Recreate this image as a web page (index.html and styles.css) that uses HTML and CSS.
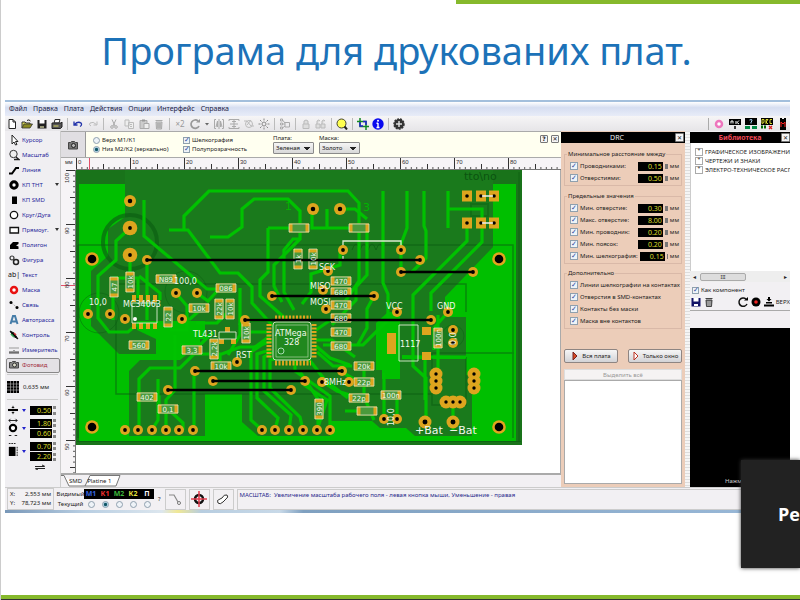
FILE: index.html
```
<!DOCTYPE html>
<html lang="uk">
<head>
<meta charset="utf-8">
<title>Програма для друкованих плат</title>
<link rel="stylesheet" href="styles.css">
</head>
<body>
<div class="slide">
<div class="accent-top"></div>
<h1>Програма для друкованих плат.</h1>

<main class="app">
<nav class="menu"><a href="#">Файл</a><a href="#">Правка</a><a href="#">Плата</a><a href="#">Действия</a><a href="#">Опции</a><a href="#">Интерфейс</a><a href="#">Справка</a></nav>

<div class="toolbar">
<div class="group">
<button aria-label="Новый"><svg viewBox="0 0 12 12"><path d="M3 1.500h4l2.500 2.500v6.500H3zM7 1.500v2.500h2.500" fill="#fff" stroke="#222"/></svg></button>
<button aria-label="Открыть"><svg viewBox="0 0 12 12"><path d="M1 10V4h3l1 1h4v1" fill="#d8d850" stroke="#333"/><path d="M1 10l2-4h8.500l-2.500 4z" fill="#8a8a20" stroke="#333" stroke-width=".8"/><path d="M6 2.500q2-1.500 3.500.5" fill="none" stroke="#222"/></svg></button>
<button aria-label="Сохранить"><svg viewBox="0 0 12 12"><path d="M1.500 2h9v8.500h-9z" fill="#222"/><path d="M3.500 2h5v3.500h-5z" fill="#fff"/><path d="M4 8h4v2H4z" fill="#997"/></svg></button>
<button aria-label="Печать"><svg viewBox="0 0 12 12"><path d="M4 1.500h5L8 5H3z" fill="#fff" stroke="#333"/><path d="M1 5h9l1-1v5l-1.500 1.500H1z" fill="#555" stroke="#222"/><path d="M2.500 8h5" stroke="#dd6"/></svg></button>
</div>
<div class="group">
<button aria-label="Отменить"><svg viewBox="0 0 12 12"><path d="M2 3.500v3.500h3.500M2.500 6.500Q6 3 9 5q1.500 2-1 3.500" fill="none" stroke="#2233aa" stroke-width="1.300"/></svg></button>
<button aria-label="Вернуть"><svg viewBox="0 0 12 12"><path d="M10 3.500v3.500H6.500M9.500 6.500Q6 3 3 5q-1.500 2 1 3" fill="none" stroke="#bbb"/></svg></button>
</div>
<div class="group">
<button aria-label="Вырезать"><svg viewBox="0 0 12 12"><path d="M4 1.500l3 6.500M8 1.500L5 8" stroke="#aaa"/><circle cx="4" cy="9" r="1.300" fill="none" stroke="#aaa"/><circle cx="8" cy="9" r="1.300" fill="none" stroke="#aaa"/></svg></button>
<button aria-label="Копировать"><svg viewBox="0 0 12 12"><path d="M2 2h4v6H2zM5.500 4.500h5v6h-5z" fill="#eee" stroke="#bbb"/><path d="M7 6.500h2M7 8.500h2" stroke="#bbb"/></svg></button>
<button aria-label="Вставить"><svg viewBox="0 0 12 12"><path d="M2 2.500h7v8H2z" fill="#ccc" stroke="#aaa"/><path d="M4 1.500h3v2H4z" fill="#999"/><path d="M6 5.500h5v5H6z" fill="#eee" stroke="#aaa"/></svg></button>
<button aria-label="Удалить"><svg viewBox="0 0 12 12"><path d="M3 4h6l-.5 7h-5zM2.500 2.500h7" fill="#ccc" stroke="#aaa"/><path d="M5 5v5M7 5v5" stroke="#999"/></svg></button>
</div>
<div class="group">
<button aria-label="Дублировать" class="x2">×2</button>
<button aria-label="Повернуть"><svg viewBox="0 0 12 12"><path d="M9 3A4.200 4.200 0 1 0 10 8" fill="none" stroke="#999" stroke-width="1.700"/><path d="M7 4.500h4V1z" fill="#999"/></svg></button>
<button aria-label="Угол поворота" class="drop"><svg viewBox="0 0 6 12"><path d="M1 5h4L3 7.500z" fill="#666"/></svg></button>
<button aria-label="По горизонтали"><svg viewBox="0 0 12 12"><path d="M3 1.500H1.500v9H3M9 1.500h1.500v9H9M6 1v10M3 9l1.500-6v6M9 9L7.500 3v6" fill="none" stroke="#aaa"/></svg></button>
<button aria-label="По вертикали"><svg viewBox="0 0 12 12"><path d="M1 3V1.500h10V3M1 9v1.500h10V9M2 6h8M4 3.500h4M4 8.500h4M6 2v8" fill="none" stroke="#aaa"/></svg></button>
<button aria-label="Выровнять"><svg viewBox="0 0 12 12"><path d="M1 3h3l4 5h3M8 2L4 7" fill="none" stroke="#bbb"/><circle cx="6" cy="6" r="3.500" fill="none" stroke="#bbb"/></svg></button>
<button aria-label="По сетке"><svg viewBox="0 0 12 12"><circle cx="6" cy="6" r="2" fill="none" stroke="#888"/><path d="M6 .5v2M6 9.500v2M.5 6h2M9.500 6h2M2 2l1.500 1.500M8.500 8.500L10 10M2 10l1.500-1.500M8.500 3.500L10 2" stroke="#888"/></svg></button>
</div>
<div class="group"><button aria-label="Список"><svg viewBox="0 0 12 12"><path d="M1.500 1h2v2h-2zM1.500 5h2v2h-2zM1.500 9h2v2h-2zM3.500 2L6 5M3.500 6H6M3.500 10L6 8M6 4.500h4.500V9H6z" fill="none" stroke="#aaa"/></svg></button></div>
<div class="group">
<button aria-label="Группировать"><svg viewBox="0 0 12 12"><path d="M3 6h6v4.500H3zM4 6V3q2-2 4 0v3" fill="#ddd" stroke="#bbb"/></svg></button>
<button aria-label="Разгруппировать"><svg viewBox="0 0 12 12"><path d="M1 6h4v4H1zM6 6h4v4H6zM2 6V3q2-2 3 0M7 6V3q2-2 3 0" fill="#ddd" stroke="#bbb"/></svg></button>
</div>
<div class="group"><button aria-label="Лупа"><svg viewBox="0 0 12 12"><circle cx="5.500" cy="5.500" r="4.500" fill="#ffff50" stroke="#443"/><path d="M8.500 8.500L11 11.500" stroke="#222" stroke-width="2"/></svg></button></div>
<div class="group">
<button aria-label="Обрезка"><svg viewBox="0 0 12 12"><path d="M3 0v8.500h9M0 3.500h9V12" fill="none" stroke="#118822" stroke-width="1.500"/><path d="M3 4v4h3M6 3.500h3V7" fill="none" stroke="#22c" stroke-width="1.500"/></svg></button>
<button aria-label="Информация"><svg viewBox="0 0 12 12"><circle cx="6" cy="6" r="5.700" fill="#0909ef"/><path d="M6 5v4.500M4.500 5.200H6M4.500 9.500h3" stroke="#fff" stroke-width="1.400"/><circle cx="6" cy="2.800" r="1" fill="#fff"/></svg></button>
</div>
<div class="group last"><button aria-label="Макрос"><svg viewBox="0 0 12 12"><circle cx="6" cy="6" r="5" fill="#333" stroke="#333" stroke-width="1.500" stroke-dasharray="2 1"/><path d="M6 3v6M3 6h6" stroke="#ddd" stroke-width="1.500"/></svg></button></div>
<div class="group views">
<button aria-label="Отверстия"><svg viewBox="0 0 12 12"><circle cx="6" cy="6" r="3" fill="#fff" stroke="#ee76bd" stroke-width="2.500"/></svg></button>
<button aria-label="Свойства"><svg viewBox="0 0 12 12"><path d="M0 1h12v6H0z"/><path d="M2 5.500V3h2v2.500M7 3v3M10 2.500l-2 2 2 1.500" fill="none" stroke="#fff"/><path d="M6 8v3" stroke="#000" stroke-width="1.500"/></svg></button>
<button aria-label="Селектор"><svg viewBox="0 0 12 12"><path d="M0 0h12v7H0z"/><path d="M4.500 2q3-1.500 2.500 1L6 4v1.500" fill="none" stroke="#adf"/><path d="M0 8h5v3H0zM7 8h5v3H7z" fill="#084"/></svg></button>
<button aria-label="DRC"><svg viewBox="0 0 12 12"><path d="M0 0h12v7H0z"/><path d="M1 1.500v4q3 0 2-4zM5 6V1.500h2L5 4l2 2M11 1.500H9v4h2" fill="none" stroke="#ee3" stroke-width=".9"/><path d="M0 9h6" stroke="#060" stroke-width="3" stroke-dasharray="2 1"/><path d="M8 8l3 3M11 8l-3 3" stroke="#d22" stroke-width="1.300"/></svg></button>
<button aria-label="Макросы"><svg viewBox="0 0 12 12"><path d="M3 0h2v1h2V0h2v12H3z"/><path d="M4 9V4l2 2 2-2v5" fill="none" stroke="#f22"/></svg></button>
</div>
</div>

<div class="body">
<aside class="tools">
<button><svg viewBox="0 0 12 12"><path d="M4 1v9l2-2 1.500 3L9 10.500 7.500 7.500H10z" fill="#fff" stroke="#222"/></svg>Курсор</button>
<button><svg viewBox="0 0 12 12"><circle cx="5.500" cy="5" r="3.700" fill="#eee" stroke="#333"/><path d="M8 8l3 2.500H6" stroke="#222" fill="none" stroke-width="1.300"/></svg>Масштаб</button>
<button><svg viewBox="0 0 12 12"><path d="M1 9.500h3L8 4h3" fill="none" stroke="#000" stroke-width="2"/></svg>Линия</button>
<button><svg viewBox="0 0 12 12"><circle cx="6" cy="6" r="3.200" fill="#fff" stroke="#000" stroke-width="3"/></svg>КП ТНТ<i></i></button>
<button><svg viewBox="0 0 12 12"><path d="M4 2.500h5v7.500H4z"/></svg>КП SMD</button>
<button><svg viewBox="0 0 12 12"><circle cx="6" cy="6" r="3.700" fill="#fff" stroke="#111" stroke-width="1.300"/></svg>Круг/Дуга</button>
<button><svg viewBox="0 0 12 12"><path d="M2 3.500h8.500v5.500H2z" fill="#fff" stroke="#111" stroke-width="1.300"/></svg>Прямоуг.<i></i></button>
<button><svg viewBox="0 0 12 12"><path d="M2 10V6l3-3h5.500v2L8 6.500l2.500 1V10z"/></svg>Полигон</button>
<button><svg viewBox="0 0 12 12"><circle cx="4" cy="4" r="2" fill="none" stroke="#333" stroke-width="1.200"/><circle cx="8" cy="8" r="2.500" fill="none" stroke="#222" stroke-width="1.500"/></svg>Фигура</button>
<button><b>ab|</b>Текст</button>
<button><svg viewBox="0 0 12 12"><circle cx="6" cy="6" r="3" fill="#fff" stroke="#e81111" stroke-width="2.500"/></svg>Маска</button>
<button><svg viewBox="0 0 12 12"><path d="M3 3.500l6 5" stroke="#999" stroke-dasharray="1 1"/><circle cx="3" cy="3.500" r="1.500"/><circle cx="9" cy="8.500" r="1.500"/></svg>Связь</button>
<button><svg viewBox="0 0 12 12"><path d="M2.500 10L5 2h2l2.500 8M4 7.500h4" fill="none" stroke="#447ca8" stroke-width="2"/></svg>Автотрасса</button>
<button><svg viewBox="0 0 12 12"><path d="M2 2l4 2 4 6-5-3z" stroke="#111"/><path d="M3 5l3 3" stroke="#3a5" stroke-width="1.500"/><path d="M6 4l2 2" stroke="#c33" stroke-width="1.500"/></svg>Контроль</button>
<button><svg viewBox="0 0 12 12"><path d="M1 4h10" stroke="#999"/><path d="M1 9h10M2 9V7M4 9V7M6 9V6M8 9V7M10 9V7" stroke="#444"/></svg>Измеритель</button>
<button class="active"><svg viewBox="0 0 12 12"><path d="M1.500 3.500h2l1-1h3l1 1h2V9h-9z" fill="#888" stroke="#444"/><circle cx="6.500" cy="6" r="2" fill="#ddc" stroke="#333"/></svg>Фотовид</button>
<div class="grid-step"><svg viewBox="0 0 12 12"><path d="M0 0h12v12H0z"/><path d="M3.500 0v12M6.500 0v12M9.500 0v12M0 3h12M0 6h12M0 9h12" stroke="#bbb" stroke-width=".6"/></svg>0,635 мм</div>
<div class="size"><svg viewBox="0 0 12 12"><path d="M0 6h12" stroke="#000" stroke-width="2.500"/><path d="M6 1v3M6 8v3M4.500 3h3M4.500 9h3" stroke="#000"/></svg><i></i><div><input aria-label="Ширина дорожки" value="0.50"></div></div>
<div class="size"><svg viewBox="0 0 12 24"><path d="M1 3h10M3 1L1 3l2 2M9 1l2 2-2 2M1 21h3M8 21h3" fill="none" stroke="#000"/><circle cx="6" cy="12" r="3.800" fill="#fff" stroke="#000" stroke-width="2.500"/></svg><i></i><div><input aria-label="Диаметр площадки" value="1.80"><input aria-label="Диаметр отверстия" value="0.60"></div></div>
<div class="size"><svg viewBox="0 0 12 24"><path d="M1 7h8v11H1z"/><path d="M1 3h8M11 7v11" stroke="#000" stroke-dasharray="2 1"/></svg><i></i><div><input aria-label="Ширина SMD" value="0.70"><input aria-label="Высота SMD" value="2.20"></div></div>
<svg class="swap" viewBox="0 0 12 6"><path d="M1 2.500h9M8 1l3 1.500M11 4.500H2M4 6L1 4.500" fill="none" stroke="#222"/></svg>
</aside>

<section class="work">
<div class="options">
<div class="camera"><svg viewBox="0 0 12 12"><path d="M1.500 3.500h2l1-1h3l1 1h2V10h-9z" fill="#777" stroke="#444"/><circle cx="6.500" cy="6.500" r="2" fill="#bbb" stroke="#222"/></svg></div>
<div class="stack sides"><label><input type="radio" name="side">Верх М1/К1</label><label><input type="radio" name="side" checked>Низ М2/К2 (зеркально)</label></div>
<div class="stack"><label><input type="checkbox" checked>Шелкография</label><label><input type="checkbox" checked>Полупрозрачность</label></div>
<label class="pick">Плата:<select><option>Зеленая</option></select></label>
<label class="pick">Маска:<select><option>Золото</option></select></label>
<div class="corner"><button>?</button><button aria-label="Закрыть">✕</button></div>
</div>
<div class="ruler-row"><span class="unit">мм</span>
<svg class="hruler" height="12">
<defs>
<pattern id="ht" width="54" height="12" patternUnits="userSpaceOnUse"><path d="M.5 0v12M27.500 6v6" stroke="#333"/><path d="M5.900 9v3M11.300 9v3M16.700 9v3M22.100 9v3M32.900 9v3M38.300 9v3M43.700 9v3M49.100 9v3" stroke="#555"/></pattern></defs>
<rect width="100%" height="12" fill="url(#ht)"/><path d="M0 11.500h490" stroke="#777"/><path d="M13.500 0v12" stroke="#e2506a"/>
<g class="num"><text x="2" y="6">0</text><text x="56" y="6">10</text><text x="110" y="6">20</text><text x="164" y="6">30</text><text x="218" y="6">40</text><text x="272" y="6">50</text><text x="326" y="6">60</text><text x="380" y="6">70</text><text x="434" y="6">80</text></g>
</svg></div>
<div class="view">
<svg class="vruler" width="15">
<defs><pattern id="vt" width="15" height="54" patternUnits="userSpaceOnUse"><path d="M5 .5h10M9 27.500h6" stroke="#333"/><path d="M12 5.900h3M12 11.300h3M12 16.700h3M12 22.100h3M12 32.900h3M12 38.300h3M12 43.700h3M12 49.100h3" stroke="#555"/></pattern></defs>
<rect width="15" height="100%" fill="url(#vt)"/><path d="M14.500 0v304" stroke="#777"/><path d="M0 115.500h14" stroke="#e2506a"/>
<g class="num"><text transform="translate(8 13)rotate(-90)">100</text><text transform="translate(8 64)rotate(-90)">90</text><text transform="translate(8 118)rotate(-90)">80</text><text transform="translate(8 172)rotate(-90)">70</text><text transform="translate(8 226)rotate(-90)">60</text><text transform="translate(8 280)rotate(-90)">50</text></g>
</svg>
<svg class="board" viewBox="76 170 446 275" width="446" height="275">
<defs>
<g id="p"><circle r="5" fill="#dda51e"/><circle r="1.900"/></g>
<g id="q"><circle r="7.300" fill="#dda51e"/><circle r="1.900"/></g>
<g id="o"><circle r="6.800" fill="#e2a51e"/><circle r="4.300"/></g>
<g id="s"><path d="M-10-4.500h20v9h-20z" fill="#dda51e"/><path d="M-6.500-4.500h13v9h-13z" fill="#4a9a3c"/><path d="M-10-4h20v8h-20z" fill="none" stroke="#e0ead0" stroke-width=".7"/></g>
<g id="k"><path d="M-5-5.500H5v11H-5z" fill="#dda51e"/><circle r="1.800"/></g>
</defs>
<rect x="76" y="170" width="446" height="275" fill="#19731a"/>
<rect x="79" y="184" width="437" height="257" fill="#00bf00"/>
<path fill="#1a7a1c" d="M125 170H493V247L445 297V317H466V375H472V436H415L406 428H380L372 421H330V436H258L242 422V394H205V436H129V371L140 360H180L190 352H200V334H156V354H119L91 326V271L108 256V229L125 217Z"/>
<path fill="#00bf00" d="M376 323L388 312H400V379H382V370H376ZM137 321H205V339H156L137 330ZM402 355L466 356V359H402Z"/>
<g fill="none" stroke="#0b5d12">
<circle cx="130" cy="242" r="27" stroke-width="4" opacity=".65"/>
<path d="M78 245H513V438M78 245V438M116 320V394H432M116 284H466V312M432 353H514M432 353V405H466V357" stroke-width="1.500" opacity=".55"/>
<path d="M77 441.500H521M519 172V441M352 250q4-12 8 0 4-12 8 0 4-12 8 0 4-12 8 0" opacity=".7"/>
<circle cx="186" cy="292" r="21" opacity=".45"/><circle cx="99" cy="313" r="20" opacity=".45"/><circle cx="453" cy="336" r="11" opacity=".45"/>
<path d="M471 204h17v12h-17z" stroke-width="2" opacity=".4"/>
</g>
<g fill="none" stroke="#00c200" stroke-width="3.200">
<path d="M144 200V236L207 289H220M169 230H188L220 273H238L252 287V303L273 326M184 230V216L209 191H348L359 203V281L340 309M210 237H228L242 227V209L254 199H288L300 211V239L274 265V286L282 302"/>
<path d="M268 228H299M268 228V272L260 280V296L286 319M299 239H293L284 250V292L294 310M130 228L116 241V260L98 276V318L109 332H128L139 323"/>
<path d="M147 260V320M130 256V280M112 278H138V298M139 276L160 293V300M176 293L187 306V330H170M197 293L208 301 220 288M240 288V335L228 355M220 354V369"/>
<path d="M139 430V379L150 368H180L194 354H222L240 347H255L270 336M152 430L158 420V379M166 430V400L175 390V335M194 430V374M262 430L251 420V352L266 342M275 430L278 418 257 398V354L270 350M289 430L291 415 264 391V357L273 352M303 430L300 417 270 388V360L280 358M317 430L327 400 304 385M330 430V396L295 371V360"/>
<path d="M383 191V283L388 294V320L363 345H323M407 191V228L401 244V273M424 191V226L426 231V258L412 272M448 191V228M448 209H482V242L431 293V311M467 227V241L413 295V366L426 378V425M312 211V228H359M327 209V228M340 209H355L367 219M367 230V275L356 287V300L332 325M340 250V265L311 274V292L302 304M374 296L367 309V328L357 346M316 330L332 319M316 340H332L355 357M316 346L330 358 350 365M317 352L333 366 352 366M308 358L325 380 348 398M323 382L337 391 350 395M300 372L318 399V426M340 371L359 382M364 366V397L374 420M397 419V398M384 419V373M425 357V400M453 402V430M438 315V375L430 381M466 357H430M448 312L434 328V350M345 411H370"/>
<path d="M196 323H217L230 310M180 345H200L213 332M147 397H159V413M168 409L183 423V430M113 292V320M182 319H190L200 310M243 320H272M270 332H249L239 323M272 341L252 348"/>
</g>
<g fill="#dda51e">
<path d="M132 295h4v7h-4zM139 295h4v7h-4zM146 295h4v7h-4zM153 295h4v7h-4zM132 323h4v6h-4zM139 323h4v6h-4zM146 323h4v6h-4zM153 323h4v6h-4z"/>
<path d="M225 327h5v5h-5zM219 339h5v5h-5zM231 339h5v5h-5zM387 333h9v21h-9zM422 327h9v8h-9zM422 352h9v8h-9z"/>
</g>
<path d="M275 318H311M275 363H311M269 324V358M314 324V358" fill="none" stroke="#dda51e" stroke-width="5" stroke-dasharray="2 1.500"/>
<rect x="273" y="322" width="38" height="38" rx="3" fill="#20881e" stroke="#c8dfb8"/>
<rect x="276" y="325" width="32" height="32" fill="none" stroke="#c8dfb8" stroke-width=".6"/>
<circle cx="281" cy="351" r="3" fill="none" stroke="#dfe" stroke-width=".7"/>
<g fill="none" stroke="#dcebd0" stroke-width=".9"><path d="M132 303h25v20h-25zM219 332h17v7h-17zM399 325h19v36h-19z"/><path d="M343 250V241H401V250M343 256v3" stroke-width="1.300"/></g>
<circle cx="135" cy="319" r="2" fill="#fff"/>
<use href="#s" x="166" y="279"/><use href="#s" x="226" y="288"/><use href="#s" x="199" y="308"/><use href="#s" x="139" y="345"/><use href="#s" x="192" y="350"/><use href="#s" x="221" y="366"/><use href="#s" x="147" y="397"/><use href="#s" x="168" y="409"/><use href="#s" x="299" y="228"/><use href="#s" x="359" y="228"/><use href="#s" x="341" y="281"/><use href="#s" x="341" y="292"/><use href="#s" x="341" y="305"/><use href="#s" x="341" y="318"/><use href="#s" x="341" y="332"/><use href="#s" x="341" y="346"/><use href="#s" x="364" y="366"/><use href="#s" x="364" y="382"/><use href="#s" x="359" y="398"/><use href="#s" x="391" y="395"/><use href="#s" x="367" y="411"/>
<use href="#s" transform="translate(130 282)rotate(90)"/><use href="#s" transform="translate(114 287)rotate(90)"/><use href="#s" transform="translate(168 317)rotate(90)"/><use href="#s" transform="translate(219 309)rotate(90)"/><use href="#s" transform="translate(230 309)rotate(90)"/><use href="#s" transform="translate(246 333)rotate(90)"/><use href="#s" transform="translate(214 349)rotate(90)"/><use href="#s" transform="translate(298 259)rotate(90)"/><use href="#s" transform="translate(313 259)rotate(90)"/><use href="#s" transform="translate(319 409)rotate(90)"/><use href="#s" transform="translate(438 338)rotate(90)"/>
<g fill="#dda51e"><circle cx="436" cy="374" r="6.500"/><circle cx="436" cy="381" r="6.500"/><circle cx="436" cy="388" r="6.500"/><circle cx="474" cy="374" r="6.500"/><circle cx="474" cy="381" r="6.500"/><circle cx="474" cy="388" r="6.500"/><circle cx="446" cy="402" r="6.500"/><circle cx="453" cy="402" r="6.500"/><circle cx="460" cy="402" r="6.500"/></g>
<g><circle cx="436" cy="374" r="1.700"/><circle cx="436" cy="381" r="1.700"/><circle cx="436" cy="388" r="1.700"/><circle cx="474" cy="374" r="1.700"/><circle cx="474" cy="381" r="1.700"/><circle cx="474" cy="388" r="1.700"/><circle cx="446" cy="402" r="1.700"/><circle cx="453" cy="402" r="1.700"/><circle cx="460" cy="402" r="1.700"/></g>
<use href="#k" x="467" y="196"/><use href="#k" x="481" y="196"/><use href="#k" x="494" y="196"/><use href="#k" x="467" y="223"/><use href="#k" x="481" y="223"/><use href="#k" x="494" y="223"/>
<path d="M482 196h11M482 223h11" stroke="#eee" stroke-width="1.500"/>
<use href="#q" x="130" y="228"/><use href="#q" x="130" y="255"/><use href="#p" transform="translate(130 201)scale(1.200)"/><use href="#p" transform="translate(313 209)scale(1.200)"/><use href="#p" transform="translate(340 209)scale(1.200)"/><use href="#p" transform="translate(425 422)scale(1.300)"/><use href="#p" transform="translate(453 422)scale(1.300)"/>
<use href="#p" x="147" y="260"/><use href="#p" x="88" y="314"/><use href="#p" x="110" y="314"/><use href="#p" x="176" y="293"/><use href="#p" x="197" y="293"/><use href="#p" x="125" y="319"/><use href="#p" x="182" y="319"/><use href="#p" x="343" y="250"/><use href="#p" x="401" y="250"/><use href="#p" x="420" y="260"/><use href="#p" x="401" y="272"/><use href="#p" x="473" y="272"/><use href="#p" x="328" y="271"/><use href="#p" x="323" y="290"/><use href="#p" x="326" y="309"/><use href="#p" x="374" y="296"/><use href="#p" x="272" y="296"/><use href="#p" x="397" y="312"/><use href="#p" x="448" y="312"/><use href="#p" x="431" y="320"/><use href="#p" x="245" y="320"/><use href="#p" x="237" y="362"/><use href="#p" x="195" y="371"/><use href="#p" x="213" y="381"/><use href="#p" x="168" y="390"/><use href="#p" x="291" y="390"/><use href="#p" x="342" y="371"/><use href="#p" x="305" y="381"/><use href="#p" x="322" y="382"/><use href="#p" x="349" y="382"/><use href="#p" x="384" y="419"/><use href="#p" x="397" y="419"/><use href="#p" x="453" y="330"/><use href="#p" x="453" y="343"/>
<use href="#p" x="125" y="430"/><use href="#p" x="138" y="430"/><use href="#p" x="152" y="430"/><use href="#p" x="166" y="430"/><use href="#p" x="179" y="430"/><use href="#p" x="193" y="430"/><use href="#p" x="262" y="430"/><use href="#p" x="275" y="430"/><use href="#p" x="289" y="430"/><use href="#p" x="303" y="430"/><use href="#p" x="317" y="430"/><use href="#p" x="330" y="430"/>
<use href="#o" x="92" y="259"/><use href="#o" x="499" y="259"/><use href="#o" x="92" y="427"/><use href="#o" x="499" y="427"/>
<path d="M147 260H420M401 272H473M272 296H374M245 320H431M195 371H342M213 381H305M168 390H291" stroke="#000" stroke-width="2.700"/>
<g class="silk">
<text x="89" y="305">10,0</text><text x="174" y="284">100,0</text><text x="123" y="307">MC34063</text><text x="193" y="337">TL431</text><text x="236" y="358">RST</text><text x="275" y="336">ATMega</text><text x="284" y="345">328</text><text x="319" y="270">SCK</text><text x="310" y="289">MISO</text><text x="310" y="305">MOSI</text><text x="386" y="309">VCC</text><text x="437" y="309">GND</text><text x="400" y="347">1117</text><text x="324" y="385">8MHz</text><text transform="translate(394 426)rotate(-90)">10,0</text><text transform="translate(456 345)rotate(-90)">0,0</text>
<text class="big" x="415" y="434">+Bat</text><text class="big" x="449" y="434">−Bat</text>
</g>
<g class="silk value"><text x="166" y="282">N89</text><text x="226" y="291">086</text><text x="199" y="311">10k</text><text x="139" y="348">560</text><text x="192" y="353">3,3</text><text x="221" y="369">10k</text><text x="147" y="400">402</text><text x="168" y="412">0,1</text><text x="341" y="284">470</text><text x="341" y="295">680</text><text x="341" y="308">470</text><text x="341" y="321">680</text><text x="341" y="335">470</text><text x="341" y="349">680</text><text x="364" y="369">20k</text><text x="364" y="385">22p</text><text x="359" y="401">22p</text><text x="391" y="398">100n</text>
<text transform="translate(133 282)rotate(-90)">10k</text><text transform="translate(117 287)rotate(-90)">47</text><text transform="translate(171 317)rotate(-90)">22</text><text transform="translate(222 309)rotate(-90)">22k</text><text transform="translate(233 309)rotate(-90)">10k</text><text transform="translate(249 333)rotate(-90)">10k</text><text transform="translate(217 349)rotate(-90)">2,2k</text><text transform="translate(301 259)rotate(-90)">1k</text><text transform="translate(316 259)rotate(-90)">10k</text><text transform="translate(322 409)rotate(-90)">390</text><text transform="translate(441 338)rotate(-90)">100n</text></g>
<g class="etch"><text x="285" y="210">1</text><text x="363" y="211">3</text></g><text class="etch dark" x="464" y="180">tto\no</text>
</svg>
</div>
<div class="tabs"><svg viewBox="0 0 60 12"><path d="M0 .5h3L8 11h16L29 .500H59L55 11H24" fill="#fff" stroke="#777"/></svg><a href="#">SMD</a><a href="#">Platine 1</a></div>
</section>

<section class="drc">
<h2>DRC<button aria-label="Закрыть">✕</button></h2>
<div class="drc-body">
<fieldset><legend>Минимальное расстояние между</legend>
<div class="limit"><label><input type="checkbox" checked>Проводниками:</label><input class="val" aria-label="Проводниками" value="0.15"><b></b>мм</div>
<div class="limit"><label><input type="checkbox" checked>Отверстиями:</label><input class="val" aria-label="Отверстиями" value="0.50"><b></b>мм</div></fieldset>
<fieldset><legend>Предельные значения</legend>
<div class="limit"><label><input type="checkbox" checked>Мин. отверстие:</label><input class="val" aria-label="Мин. отверстие" value="0.30"><b></b>мм</div>
<div class="limit"><label><input type="checkbox" checked>Макс. отверстие:</label><input class="val" aria-label="Макс. отверстие" value="8.00"><b></b>мм</div>
<div class="limit"><label><input type="checkbox" checked>Мин. проводник:</label><input class="val" aria-label="Мин. проводник" value="0.20"><b></b>мм</div>
<div class="limit"><label><input type="checkbox" checked>Мин. поясок:</label><input class="val" aria-label="Мин. поясок" value="0.20"><b></b>мм</div>
<div class="limit"><label><input type="checkbox" checked>Мин. шелкография:</label><input class="val" aria-label="Мин. шелкография" value="0.15"><b></b>мм</div></fieldset>
<fieldset><legend>Дополнительно</legend>
<div class="limit"><label><input type="checkbox" checked>Линии шелкографии на контактах</label></div>
<div class="limit"><label><input type="checkbox" checked>Отверстия в SMD-контактах</label></div>
<div class="limit"><label><input type="checkbox" checked>Контакты без маски</label></div>
<div class="limit"><label><input type="checkbox" checked>Маска вне контактов</label></div></fieldset>
<div class="run"><button><svg viewBox="0 0 8 10"><path d="M2 1l4 4-4 4z" fill="#d64a22" stroke="#722"/></svg>Вся плата</button><button><svg viewBox="0 0 8 10"><path d="M2 1l4 4-4 4z" fill="#fff" stroke="#b32"/></svg>Только окно</button></div>
<button class="all" disabled>Выделить всё</button>
<div class="results"></div>
</div>
</section>
<div class="splitter"></div>
<section class="library">
<h2>Библиотека<button aria-label="Закрыть">✕</button></h2>
<ul><li>ГРАФИЧЕСКОЕ ИЗОБРАЖЕНИЕ</li><li>ЧЕРТЕЖИ И ЗНАКИ</li><li>ЭЛЕКТРО-ТЕХНИЧЕСКОЕ РАСП</li></ul>
<div class="scroll"><span>◂</span><div>III</div><span>▸</span></div>
<label class="comp"><input type="checkbox" checked>Как компонент</label>
<div class="lib-tools">
<button aria-label="Сохранить"><svg viewBox="0 0 12 12"><path d="M1.500 2h9v8.500h-9z" fill="#116"/><path d="M3.500 2h5v3.500h-5zM4 8h4v2H4z" fill="#fff"/></svg></button>
<button aria-label="Удалить"><svg viewBox="0 0 12 12"><path d="M3 4h6l-.5 6.500h-5zM2.500 2.500h7" fill="#666" stroke="#444"/><path d="M5 5v5M7 5v5" stroke="#ccc"/></svg></button>
<button class="push" aria-label="Повернуть"><svg viewBox="0 0 12 12"><path d="M9 3A4.200 4.200 0 1 0 10 8" fill="none" stroke="#111" stroke-width="1.500"/><path d="M7 4.500h4V1z"/></svg></button>
<button aria-label="Точка"><svg viewBox="0 0 12 12"><circle cx="6" cy="6" r="4.500"/><circle cx="6" cy="6" r="1.800" fill="#e22"/></svg></button>
<button aria-label="Вниз"><svg viewBox="0 0 12 12"><path d="M5 1h2v2h1.500L6 5.500 3.500 3H5zM3 6h6v1.500H3zM1 8.500h10v2H1z"/></svg></button><span>ВЕРХ</span></div>
<div class="blank"></div>
<div class="preview">Нажмите</div>
</section>
</div>

<footer class="status">
<div class="coords"><span>X:</span><span>2,553 мм</span><span>Y:</span><span>78,723 мм</span></div>
<div class="layers"><span>Видимый</span><b class="m1">М1</b><b class="k1">К1</b><b class="m2">М2</b><b class="k2">К2</b><b>П</b><span>Текущий</span><input type="radio" name="layer" aria-label="М1"><input type="radio" name="layer" aria-label="К1" checked><input type="radio" name="layer" aria-label="М2"><input type="radio" name="layer" aria-label="К2"><input type="radio" name="layer" aria-label="П"></div>
<span class="q">?</span>
<button aria-label="Излом"><svg viewBox="0 0 16 16"><path d="M2 4h5l4 7" fill="none" stroke="#888" stroke-width="1.200"/><circle cx="12" cy="12" r="1.500" fill="#fff" stroke="#777"/></svg></button>
<button aria-label="Прицел"><svg viewBox="0 0 16 16"><circle cx="8" cy="8" r="4" fill="none" stroke="#111" stroke-width="2.500"/><path d="M8 0v16M0 8h16" stroke="#e33b4d" stroke-width="1.500"/></svg></button>
<button aria-label="Контур"><svg viewBox="0 0 16 16"><path d="M3 12q-2-3 2-4l2-1q2-4 5-3 2 2-1 4l-3 3q-3 3-5 1z" fill="#fff" stroke="#333"/></svg></button>
<p>МАСШТАБ: &nbsp;Увеличение масштаба рабочего поля - левая кнопка мыши, Уменьшение - правая</p>
</footer>
<div class="taskbar"></div>
</main>
<div class="accent-bottom"></div>
<div class="overlay">Ре</div>
</div>
</body>
</html>
```
FILE: styles.css
```
* { box-sizing: border-box; }
body { margin: 0; background: #fff; color: #222; font: 6px/8px "Noto Sans", "Open Sans", sans-serif; }
button, input, select { font: inherit; color: inherit; margin: 0; padding: 0; border: 0; background: none; }
a { color: inherit; text-decoration: none; }
svg { display: block; flex: none; }
.slide { position: relative; min-height: 100vh; display: flex; flex-direction: column; border-left: 1px solid #ccc; overflow: hidden; }
.accent-top { height: 4px; margin-left: 57%; background: #86b92c; }
.accent-bottom { height: 5px; margin-top: auto; background: #86b92c; border-bottom: 1px solid #333; }
h1 { margin: 0; height: 96px; padding-right: 8px; text-align: center; font: 400 38px/92px "Noto Sans", "Open Sans", sans-serif; color: #1c72b8; white-space: nowrap; }
.app { margin: 0 10px 0 4px; background: #f2f0f3; border-top: 2px solid #a3bfdc; }

.menu { display: flex; gap: 6px; height: 14px; padding: 0 4px; align-items: center; background: linear-gradient(#fff, #d6def1 40%, #e8ecf8); font-size: 7px; color: #222244; }
.toolbar { display: flex; height: 15px; align-items: center; padding-left: 1px; background: linear-gradient(#f6f5f6, #e6e5e8); }
.group { display: flex; gap: 3px; padding-right: 4px; margin-right: 4px; border-right: 1px solid #bbb; }
.toolbar button, .toolbar svg { width: 12px; height: 12px; }
.toolbar .drop, .drop svg { width: 6px; }
.x2 { font-size: 8px; color: #999; }
.last { border-right: 0; }
.views { margin: 0 0 0 auto; padding: 0 1px 0 4px; gap: 4px; border-right: 0; border-left: 1px solid #aaa; }

.body { display: flex; height: 356px; }
.tools { flex: none; width: 56px; padding: 2px 1px; border-right: 1px solid #ccc; background: #f0eff2; }
.tools > button { display: flex; align-items: center; gap: 2px; width: 54px; height: 15px; padding: 0 0 2px 1px; color: #27279b; text-align: left; border: 1px solid transparent; }
.tools svg { width: 12px; height: 12px; }
.tools b { width: 12px; font-weight: 400; font-size: 7px; color: #111; }
.tools button i { margin-left: auto; }
.tools i { border: 2px solid transparent; border-top: 3px solid #333; border-bottom: 0; }
.tools > .active { border: 1px solid #888; border-radius: 2px; background: #e3e1e5; color: #a22c3c; }
.grid-step { display: flex; align-items: center; gap: 4px; height: 26px; margin: 1px 1px 5px; border: solid #ccc; border-width: 1px 0; }
.size { display: flex; align-items: center; gap: 4px; min-height: 10px; margin-bottom: 3px; padding-left: 2px; }
.size svg { height: auto; width: 10px; }
.size i { border-top-color: #22c; }
.size div { display: grid; gap: 1px; border-right: 3px dotted #888; padding-right: 1px; }
.size input, .val { width: 22px; height: 9px; padding-right: 1px; text-align: right; background: #000; color: #dddd28; font-size: 7px; }
.tools .swap { width: 12px; height: 6px; margin-left: 28px; }

.work { flex: 1; min-width: 0; display: flex; flex-direction: column; }
.options { display: flex; height: 27px; background: #fffff0; border: solid #aaa; border-width: 1px 0; }
.camera { display: grid; place-items: center; width: 25px; background: #e0dee2; border-right: 1px solid #999; }
.camera svg { width: 12px; }
.stack { display: grid; align-content: center; padding-left: 7px; width: 90px; }
.stack label { display: flex; align-items: center; gap: 2px; height: 9px; white-space: nowrap; }
input[type="radio"], input[type="checkbox"] { appearance: none; flex: none; width: 7px; height: 7px; border: 1px solid #8fa0ae; background: #eef3f8; }
input[type="radio"] { border-radius: 50%; }
input[type="radio"]:checked { background: radial-gradient(#156 35%, #bde 60%); }
input[type="checkbox"]:checked::before { content: "✓"; display: block; color: #2d489a; font: 700 7px/5px "DejaVu Sans", sans-serif; text-align: center; }
.pick { width: 41px; margin: 2px 5px 0 0; }
.pick:first-of-type { margin-left: 7px; }
.pick select { display: block; width: 41px; height: 12px; padding: 0 2px; border: 1px solid #8a8a8a; border-radius: 1px; appearance: none; background: linear-gradient(to bottom left, transparent 50%, #222 50%) right 5px center / 3px 3px no-repeat, linear-gradient(to bottom right, transparent 50%, #222 50%) right 2px center / 3px 3px no-repeat, linear-gradient(#f5f5f5, #d8d8d8); background: conic-gradient(from -45deg at 50% 100%, #222 90deg, transparent 0) right 3px center / 6px 3px no-repeat, linear-gradient(#f5f5f5, #d8d8d8); }
.corner { display: flex; gap: 3px; margin: 3px 2px 0 auto; }
.corner button, h2 button { width: 8px; height: 8px; border: 1px solid #777; border-radius: 1px; background: #f4f4f4; color: #222; font: 700 6px/6px "DejaVu Sans", sans-serif; }
.ruler-row { display: flex; height: 12px; background: #f6f4f6; }
.unit { flex: none; width: 15px; padding-left: 4px; font-size: 5px; }
.hruler { flex: 1; width: 0; }
.num { font: 6px "Liberation Sans", sans-serif; fill: #333; }
.view { display: flex; flex: 1; min-height: 0; background: #fff; border-right: 1px solid #aaa; border-bottom: 2px solid #aaa; }
.vruler { height: 100%; background: #f6f4f6; }
.silk { font: 8px "DejaVu Sans", sans-serif; fill: #f2f8ec; }
.silk .big { font-size: 11px; }
.value { font-size: 7px; text-anchor: middle; }
.etch { font: 11px "DejaVu Sans", sans-serif; fill: #00b500; }
.dark { fill: #0b5410; }
.tabs { position: relative; display: flex; gap: 5px; height: 12px; padding-left: 8px; align-items: center; }
.tabs svg { position: absolute; left: 0; top: 0; width: 60px; height: 12px; }
.tabs a { position: relative; }

h2 { display: flex; align-items: center; justify-content: center; position: relative; height: 11px; margin: 1px 0 0; padding-right: 12px; background: #000; color: #eee; font: 400 7px/11px "Noto Sans", sans-serif; }
h2 button { position: absolute; right: 1px; top: 1px; width: 9px; height: 9px; }
.drc { flex: none; width: 124px; display: flex; flex-direction: column; background: #eccdb9; }
.drc-body { flex: 1; display: flex; flex-direction: column; padding: 6px 3px 3px; }
fieldset { min-width: 0; margin: 0 0 5px; padding: 0 2px 1px 5px; border: 1px solid #d9b9a8; }
legend { padding: 0 1px; height: 11px; line-height: 11px; margin-left: -3px; }
.limit { display: flex; align-items: center; gap: 2px; height: 12px; white-space: nowrap; }
fieldset:nth-of-type(n+2) { margin-bottom: 4px; }
.limit label { display: flex; flex: 1; align-items: center; gap: 2px; }
.limit input[type="checkbox"] { width: 8px; height: 8px; }
.limit input[type="checkbox"]::before { line-height: 6px; }
.val { width: 25px; }
.limit b { width: 3px; height: 5px; background: #777; }
.run { display: flex; justify-content: space-between; margin: 16px 0 6px; }
.run button { display: flex; align-items: center; justify-content: center; gap: 3px; width: 54px; height: 14px; border: 1px solid #8e8582; border-radius: 2px; background: linear-gradient(#f6f6f6, #d3d3d6); white-space: nowrap; }
.run svg { width: 8px; height: 10px; }
.all { height: 11px; border: 1px solid #ddd; background: #f5f3f3; color: #999; }
.results { flex: 1; background: #fff; border: 1px solid #aaa; }
.splitter { flex: none; width: 5px; background: repeating-linear-gradient(#ddd 0 1px, #f5f5f5 1px 3px); }
.library { flex: none; width: 100px; display: flex; flex-direction: column; overflow: hidden; }
.library h2 { padding-right: 0; color: #f04858; font-weight: 700; }
.library h2 button { right: 0; }
.library ul { flex: none; height: 128px; margin: 0; padding: 4px 0 0 4px; overflow: hidden; background: #fff; border-left: 1px solid #ccc; list-style: none; white-space: nowrap; }
.library li { display: flex; align-items: center; gap: 2px; height: 9px; }
.library li::before { content: "+"; width: 6px; height: 6px; border: 1px solid #aaa; font-size: 5px; line-height: 3px; text-align: center; flex: none; }
.scroll { display: flex; align-items: center; height: 11px; padding: 0 3px; background: #eee; }
.scroll div { width: 46px; height: 8px; margin: 0 auto 0 4px; border: 1px solid #aaa; border-radius: 2px; background: #ddd; line-height: 6px; text-align: center; font-size: 5px; }
.comp { display: flex; align-items: center; gap: 2px; height: 10px; margin-top: 3px; padding-left: 2px; }
.lib-tools { display: flex; align-items: center; height: 14px; gap: 1px; white-space: nowrap; }
.lib-tools svg { width: 12px; height: 12px; }
.lib-tools .push { margin-left: auto; }
.blank { height: 18px; margin-top: 1px; border-top: 1px solid #aaa; }
.preview { flex: 1; display: flex; align-items: flex-end; padding: 0 0 2px 35px; background: #000; color: #ccc; }

.status { display: flex; align-items: center; gap: 3px; height: 23px; padding: 0 2px; border-top: 1px solid #ccc; }
.coords { display: grid; grid-template-columns: auto 1fr; width: 47px; padding: 1px 2px; border: 1px solid #ccc; line-height: 9px; }
.coords span:nth-child(even) { text-align: right; }
.layers { display: grid; grid-template-columns: 27px repeat(5, 14px); grid-template-rows: 10px 11px; align-items: center; justify-items: center; }
.layers b { width: 100%; height: 10px; line-height: 10px; background: #000; color: #fff; text-align: center; font-size: 7px; }
.layers .m1 { color: #3565e0; }
.layers .k1 { color: #f03030; }
.layers .m2 { color: #3db83d; }
.layers .k2 { color: #e6e63c; }
.q { padding: 0 1px; }
.status button { display: grid; place-items: center; width: 21px; height: 21px; border: 1px solid #ccc; }
.status svg { width: 16px; height: 16px; }
.status p { flex: 1; min-width: 0; height: 21px; margin: 0; padding: 1px 2px; border: 1px solid #ccc; color: #28288c; white-space: nowrap; overflow: hidden; }
.taskbar { height: 3px; background: linear-gradient(90deg, #7897b8, #b8cee2 10%, #dce6ee 20%, #f0e895 22%, #b7cde0 25%, #c8d9e8 35%, #7fa0c0 38%, #9ab9d8); }
.overlay { position: absolute; right: 0; bottom: 32px; width: 59px; height: 108px; padding-left: 37px; background: #222; color: #fff; font: 700 18px/108px "Open Sans", sans-serif; box-shadow: 0 0 4px #333; overflow: hidden; }
```
